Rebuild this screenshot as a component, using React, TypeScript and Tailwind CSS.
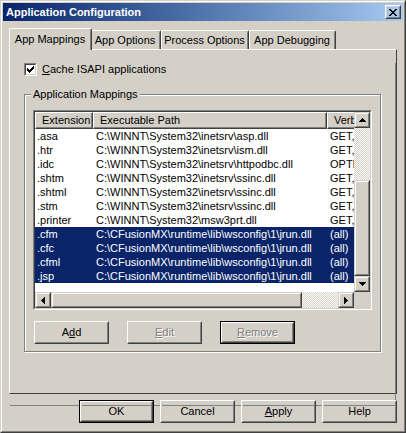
import React from "react";

type R = [number, number, number, number];

function Pix({ w, h, rects, className = "" }: { w: number; h: number; rects: R[]; className?: string }) {
  return (
    <svg width={w} height={h} viewBox={`0 0 ${w} ${h}`} shapeRendering="crispEdges" className={className}>
      {rects.map((r, i) => (
        <rect key={i} x={r[0]} y={r[1]} width={r[2]} height={r[3]} fill="currentColor" />
      ))}
    </svg>
  );
}

const CHECK: R[] = [
  [6, 0, 1, 1], [5, 1, 2, 1], [0, 2, 1, 1], [4, 2, 3, 1], [0, 3, 2, 1], [3, 3, 3, 1], [0, 4, 5, 1], [1, 5, 3, 1], [2, 6, 1, 1],
];
const CLOSE: R[] = [
  [0, 0, 2, 1], [6, 0, 2, 1], [1, 1, 2, 1], [5, 1, 2, 1], [2, 2, 4, 1], [3, 3, 2, 1], [2, 4, 4, 1], [1, 5, 2, 1], [5, 5, 2, 1], [0, 6, 2, 1], [6, 6, 2, 1],
];
const UP: R[] = [[3, 0, 1, 1], [2, 1, 3, 1], [1, 2, 5, 1], [0, 3, 7, 1]];
const DOWN: R[] = [[0, 0, 7, 1], [1, 1, 5, 1], [2, 2, 3, 1], [3, 3, 1, 1]];
const LEFT: R[] = [[0, 3, 1, 1], [1, 2, 1, 3], [2, 1, 1, 5], [3, 0, 1, 7]];
const RIGHT: R[] = [[0, 0, 1, 7], [1, 1, 1, 5], [2, 2, 1, 3], [3, 3, 1, 1]];

function Raised({ className = "", children }: { className?: string; children?: React.ReactNode }) {
  return (
    <div className={"border border-t-white border-l-white border-r-[#404040] border-b-[#404040] " + className}>
      <div className="flex h-full w-full items-center justify-center border border-t-[#d4d0c8] border-l-[#d4d0c8] border-r-[#808080] border-b-[#808080]">
        {children}
      </div>
    </div>
  );
}

function ScrollBevel({ className = "", children }: { className?: string; children?: React.ReactNode }) {
  return (
    <div className={"border border-t-[#d4d0c8] border-l-[#d4d0c8] border-r-[#404040] border-b-[#404040] bg-[#d4d0c8] " + className}>
      <div className="flex h-full w-full items-center justify-center border border-t-white border-l-white border-r-[#808080] border-b-[#808080] text-black">
        {children}
      </div>
    </div>
  );
}

function PushButton({ children, isDefault = false, disabled = false }: { children: React.ReactNode; isDefault?: boolean; disabled?: boolean }) {
  const label = (
    <span className={disabled ? "leading-[13px] text-[#808080] [text-shadow:1px_1px_0_#ffffff]" : "leading-[13px] text-black"}>{children}</span>
  );
  if (isDefault) {
    return (
      <div className="h-[23px] w-[75px] border border-black">
        <Raised className="h-full w-full">{label}</Raised>
      </div>
    );
  }
  return <Raised className="h-[23px] w-[75px]">{label}</Raised>;
}

function U({ children }: { children: React.ReactNode }) {
  return <span className="underline decoration-1 underline-offset-[1px]">{children}</span>;
}

function Tab({ label, selected = false, className = "" }: { label: string; selected?: boolean; className?: string }) {
  return (
    <div
      className={
        "rounded-tl-[2px] rounded-tr-[2px] border-l border-t border-r border-l-white border-t-white border-r-[#404040] bg-[#d4d0c8] " +
        className
      }
    >
      <div className="flex h-full items-center justify-center rounded-tr-[2px] border-r border-r-[#808080] leading-[13px]">{label}</div>
    </div>
  );
}

function HeaderCell({ label, className }: { label: string; className: string }) {
  return (
    <div className={"h-[17px] shrink-0 border border-t-white border-l-white border-r-[#404040] border-b-[#404040] bg-[#d4d0c8] " + className}>
      <div className="h-full border-r border-b border-r-[#808080] border-b-[#808080] pl-[6px] leading-[14px]">{label}</div>
    </div>
  );
}

const SYS = "C:\\WINNT\\System32\\inetsrv\\";
const JRUN = "C:\\CFusionMX\\runtime\\lib\\wsconfig\\1\\jrun.dll";
const VERBS = "GET,HEAD,POST,TRACE";

const rows = [
  { ext: ".asa", path: SYS + "asp.dll", verb: VERBS, sel: false },
  { ext: ".htr", path: SYS + "ism.dll", verb: "GET,POST", sel: false },
  { ext: ".idc", path: SYS + "httpodbc.dll", verb: "OPTIONS,GET,HEAD,POST,PUT,DELETE,TRACE", sel: false },
  { ext: ".shtm", path: SYS + "ssinc.dll", verb: "GET,POST", sel: false },
  { ext: ".shtml", path: SYS + "ssinc.dll", verb: "GET,POST", sel: false },
  { ext: ".stm", path: SYS + "ssinc.dll", verb: "GET,POST", sel: false },
  { ext: ".printer", path: "C:\\WINNT\\System32\\msw3prt.dll", verb: "GET,POST", sel: false },
  { ext: ".cfm", path: JRUN, verb: "(all)", sel: true },
  { ext: ".cfc", path: JRUN, verb: "(all)", sel: true },
  { ext: ".cfml", path: JRUN, verb: "(all)", sel: true },
  { ext: ".jsp", path: JRUN, verb: "(all)", sel: true },
];

const CHECKER =
  "bg-[image:repeating-conic-gradient(#d4d0c8_0%_25%,#ffffff_0%_50%)] bg-[length:2px_2px]";

export default function App() {
  return (
    <div className="h-[433px] w-[406px] border border-t-[#d4d0c8] border-l-[#d4d0c8] border-r-[#404040] border-b-[#404040] bg-[#d4d0c8] font-['Liberation_Sans',Arial,sans-serif] text-[11px] text-black">
      <div className="h-full w-full border border-t-white border-l-white border-r-[#808080] border-b-[#808080] p-px">
        {/* Title bar */}
        <div className="flex h-[18px] items-center justify-between bg-linear-to-r from-[#0a246a] to-[#a6caf0] pl-[3px] pr-[2px]">
          <span className="text-[11px] font-bold leading-[18px] text-white">Application Configuration</span>
          <Raised className="h-[14px] w-[16px]">
            <Pix w={8} h={7} rects={CLOSE} className="text-black" />
          </Raised>
        </div>

        <div className="px-[6px]">
          {/* Tabs */}
          <div className="mt-[7px] flex h-[21px] items-end">
            <Tab label="App Mappings" selected className="relative z-10 -mb-px h-[22px] w-[83px]" />
            <Tab label="App Options" className="-ml-[2px] h-[19px] w-[71px]" />
            <Tab label="Process Options" className="h-[19px] w-[88px]" />
            <Tab label="App Debugging" className="h-[19px] w-[87px]" />
          </div>

          {/* Panel */}
          <div className="h-[345px] border border-t-white border-l-white border-r-[#404040] border-b-[#404040]">
            <div className="h-full border-r border-b border-r-[#808080] border-b-[#808080]">
              <div className="ml-[14px] mt-[13px] flex items-center gap-[5px]">
                <div className="h-[13px] w-[13px] border border-t-[#808080] border-l-[#808080] border-r-white border-b-white">
                  <div className="flex h-full w-full items-center justify-center border border-t-[#404040] border-l-[#404040] border-r-[#d4d0c8] border-b-[#d4d0c8] bg-white">
                    <Pix w={7} h={7} rects={CHECK} className="text-black" />
                  </div>
                </div>
                <span className="leading-[13px]">
                  <U>C</U>ache ISAPI applications
                </span>
              </div>

              {/* Group box */}
              <div className="relative ml-[14px] mt-[18px] h-[258px] w-[357px] border border-[#808080] shadow-[inset_1px_1px_0_#ffffff,1px_1px_0_#ffffff]">
                <div className="absolute -top-[8px] left-[6px] bg-[#d4d0c8] px-[2px] leading-[14px]">Application Mappings</div>

                {/* List view */}
                <div className="ml-[8px] mt-[15px] h-[200px] w-[339px] border border-t-[#808080] border-l-[#808080] border-r-white border-b-white">
                  <div className="grid h-full w-full grid-cols-[319px_16px] grid-rows-[180px_16px] border border-t-[#404040] border-l-[#404040] border-r-[#d4d0c8] border-b-[#d4d0c8] bg-white">
                    <div className="overflow-hidden bg-white">
                      <div className="flex w-[440px]">
                        <HeaderCell label="Extension" className="w-[58px]" />
                        <HeaderCell label="Executable Path" className="w-[234px]" />
                        <HeaderCell label="Verbs" className="w-[140px]" />
                      </div>
                      {rows.map((r) => (
                        <div
                          key={r.ext}
                          className={
                            r.sel
                              ? "flex h-[14px] w-[440px] whitespace-nowrap bg-[#0a246a] leading-[14px] text-white"
                              : "flex h-[14px] w-[440px] whitespace-nowrap leading-[14px] text-black"
                          }
                        >
                          <div className="w-[58px] shrink-0 overflow-hidden pl-[2px]">{r.ext}</div>
                          <div className="w-[234px] shrink-0 overflow-hidden pl-[3px]">{r.path}</div>
                          <div className="w-[140px] shrink-0 overflow-hidden pl-[3px]">{r.verb}</div>
                        </div>
                      ))}
                    </div>

                    {/* vertical scrollbar */}
                    <div className="flex flex-col">
                      <ScrollBevel className="h-[16px] w-[16px]">
                        <Pix w={7} h={4} rects={UP} />
                      </ScrollBevel>
                      <div className={"h-[52px] w-[16px] " + CHECKER} />
                      <ScrollBevel className="h-[96px] w-[16px]" />
                      <ScrollBevel className="h-[16px] w-[16px]">
                        <Pix w={7} h={4} rects={DOWN} />
                      </ScrollBevel>
                    </div>

                    {/* horizontal scrollbar */}
                    <div className="flex">
                      <ScrollBevel className="h-[16px] w-[16px]">
                        <Pix w={4} h={7} rects={LEFT} />
                      </ScrollBevel>
                      <ScrollBevel className="h-[16px] w-[251px]" />
                      <div className={"h-[16px] w-[36px] " + CHECKER} />
                      <ScrollBevel className="h-[16px] w-[16px]">
                        <Pix w={4} h={7} rects={RIGHT} />
                      </ScrollBevel>
                    </div>
                    <div className="bg-[#d4d0c8]" />
                  </div>
                </div>

                <div className="ml-[9px] mt-[11px] flex gap-[18px]">
                  <PushButton>
                    A<U>d</U>d
                  </PushButton>
                  <PushButton disabled>
                    <U>E</U>dit
                  </PushButton>
                  <PushButton disabled isDefault>
                    <U>R</U>emove
                  </PushButton>
                </div>
              </div>
            </div>
          </div>

          {/* Bottom buttons */}
          <div className="mt-[6px] flex justify-end gap-[6px]">
            <PushButton isDefault>OK</PushButton>
            <PushButton>Cancel</PushButton>
            <PushButton>
              <U>A</U>pply
            </PushButton>
            <PushButton>Help</PushButton>
          </div>
        </div>
      </div>
    </div>
  );
}
